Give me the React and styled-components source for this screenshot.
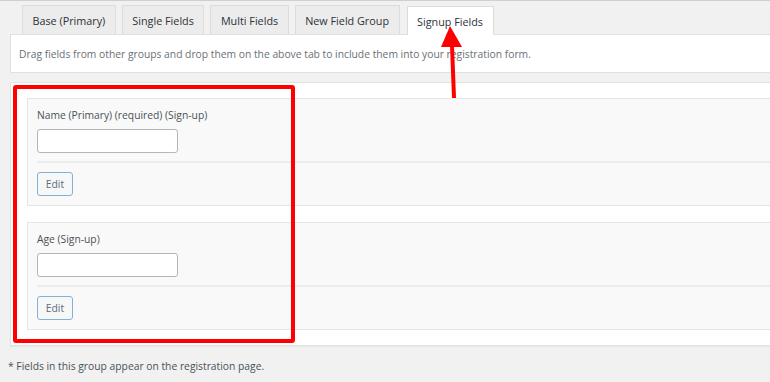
import React from 'react';
import styled, { createGlobalStyle } from 'styled-components';

const GlobalStyle = createGlobalStyle`
  body {
    margin: 0;
    background: #f1f1f1;
    font-family: "Open Sans", "Noto Sans", sans-serif;
    overflow: hidden;
  }
`;

const tabs = ['Base (Primary)', 'Single Fields', 'Multi Fields', 'New Field Group', 'Signup Fields'];

const fields = [
    { label: 'Name (Primary) (required) (Sign-up)' },
    { label: 'Age (Sign-up)' },
];

const App = () => {
    return (
        <Page>
            <GlobalStyle />
            <TabBar>
                {tabs.map((t, i) => (
                    <Tab key={t} active={i === tabs.length - 1}>{t}</Tab>
                ))}
            </TabBar>
            <Description>
                Drag fields from other groups and drop them on the above tab to include them into your registration form.
            </Description>
            <Group>
                {fields.map((f) => (
                    <FieldBox key={f.label}>
                        <Label>{f.label}</Label>
                        <Input type="text" />
                        <Actions>
                            <EditButton>Edit</EditButton>
                        </Actions>
                    </FieldBox>
                ))}
            </Group>
            <Note>* Fields in this group appear on the registration page.</Note>

            <Highlight />
            <Arrow viewBox="0 0 30 80">
                <polygon points="12,3 3,24 24,24" fill="#ff0000" />
                <line x1="14" y1="22" x2="16" y2="75" stroke="#ff0000" strokeWidth="4" />
            </Arrow>
        </Page>
    );
};

const Page = styled.div`
    position: relative;
    height: 382px;
    border-top: 1px solid #cfcfcf;
    padding: 4px 0 0 10px;
    box-sizing: border-box;
`;

const TabBar = styled.div`
    display: flex;
    align-items: flex-end;
    gap: 6px;
    padding-left: 12px;
`;

const Tab = styled.div`
    height: 28px;
    padding: 0 9.5px;
    display: flex;
    align-items: center;
    font-size: 10.8px;
    color: #2c3338;
    background: ${(p) => (p.active ? '#ffffff' : '#ececec')};
    border: 1px solid #dcdcdc;
    border-bottom: none;
    margin-bottom: ${(p) => (p.active ? '-1px' : '0')};
    position: ${(p) => (p.active ? 'relative' : 'static')};
    z-index: 1;
    margin-left: ${(p) => (p.active ? '1px' : '0')};
`;

const Description = styled.div`
    height: 37px;
    display: flex;
    align-items: center;
    padding-left: 8px;
    background: #ffffff;
    border: 1px solid #e0e0e0;
    border-right: none;
    font-size: 10.3px;
    color: #6a7075;
`;

const Group = styled.div`
    margin-top: 9px;
    background: #ffffff;
    border: 1px solid #e2e2e2;
    border-right: none;
    box-shadow: 0 1px 1px rgba(0, 0, 0, 0.04);
    padding: 15px 0 15px 16px;
    display: flex;
    flex-direction: column;
    gap: 16px;
`;

const FieldBox = styled.div`
    background: #f9f9f9;
    border: 1px solid #e6e6e6;
    border-right: none;
    padding: 9px 0 0 9px;
`;

const Label = styled.div`
    font-size: 10.3px;
    line-height: 14px;
    color: #4a5157;
    margin-bottom: 7px;
`;

const Input = styled.input`
    display: block;
    box-sizing: border-box;
    width: 141px;
    height: 24px;
    border: 1px solid #b5b5b5;
    border-radius: 3px;
    background: #ffffff;
    margin: 0;
`;

const Actions = styled.div`
    margin-top: 8px;
    border-top: 2px solid #ececec;
    padding: 8px 0 9px;
`;

const EditButton = styled.button`
    box-sizing: border-box;
    height: 24px;
    width: 36px;
    padding: 0;
    font-family: inherit;
    font-size: 10.3px;
    color: #5b6b7c;
    background: #f6f7f7;
    border: 1.5px solid #86b0d6;
    border-radius: 3px;
`;

const Note = styled.div`
    margin: 13px 0 0 -2px;
    font-size: 10.3px;
    color: #4a5157;
`;

const Highlight = styled.div`
    position: absolute;
    left: 13px;
    top: 84px;
    width: 282px;
    height: 258px;
    box-sizing: border-box;
    border: 4px solid #ff0000;
    border-radius: 3px;
    pointer-events: none;
`;

const Arrow = styled.svg`
    position: absolute;
    left: 438px;
    top: 22px;
    width: 30px;
    height: 80px;
    z-index: 2;
`;

export default App;
